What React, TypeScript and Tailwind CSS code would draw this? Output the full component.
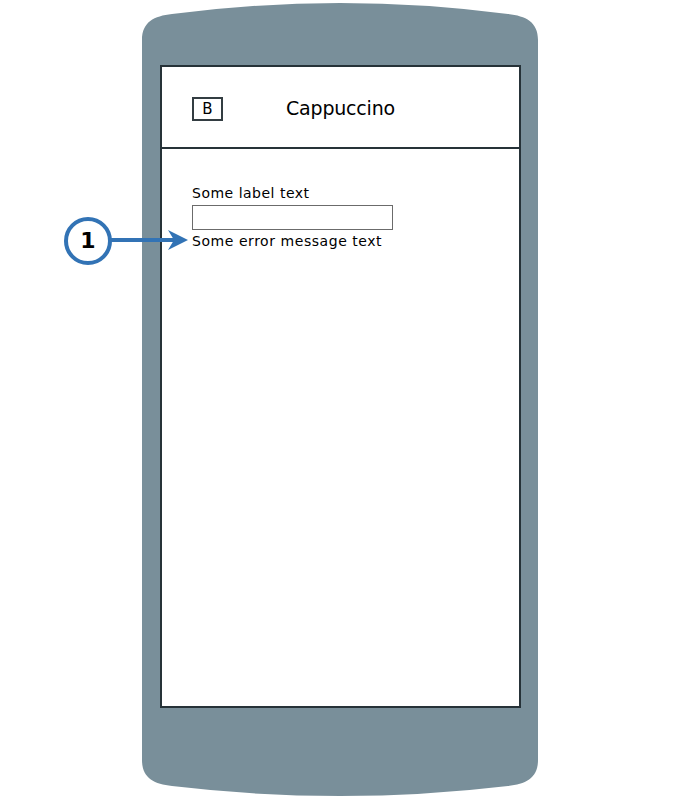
import React from "react";

const FONT = { fontFamily: '"DejaVu Sans", "Liberation Sans", sans-serif' };

export default function App() {
  return (
    <div className="relative w-[680px] h-[800px] bg-white overflow-hidden" style={FONT}>
      <div className="pl-[142px]">
        <div className="relative w-[396px] h-[800px] pt-[65px] pl-[18px]">
          <svg
            className="absolute inset-0"
            width="396"
            height="800"
            viewBox="0 0 396 800"
          >
            <path
              d="M0,40 C0,22 12,16 30,14 Q198,-8 366,14 C384,16 396,22 396,40 L396,760 C396,778 384,784 366,786 Q198,806 30,786 C12,784 0,778 0,760 Z"
              fill="#798f9a"
            />
          </svg>
          <div className="relative w-[361px] h-[643px] bg-white border-2 border-[#263238] flex flex-col">
            <div className="h-[82px] pt-[3px] border-b-2 border-[#263238] grid grid-cols-[1fr_auto_1fr] items-center">
              <div className="pl-[30px]">
                <div className="w-[31px] h-[24px] pt-[2px] border-2 border-[#333d42] flex items-center justify-center text-[15px] text-black leading-none">
                  B
                </div>
              </div>
              <div className="text-[19px] text-black leading-none tracking-[-0.2px]">Cappuccino</div>
              <div />
            </div>
            <div className="pl-[30px] pt-[35px] flex flex-col">
              <div className="text-[14px] leading-[18px] tracking-[0.5px] text-black">Some label text</div>
              <div className="mt-[3px] w-[201px] h-[25px] border border-[#6b6b6b] bg-white" />
              <div className="text-[14px] leading-[18px] tracking-[0.55px] text-black mt-[2px]">Some error message text</div>
            </div>
          </div>
        </div>
      </div>
      <div className="absolute left-[64px] top-[217px] w-[48px] h-[48px] rounded-full border-[4px] border-[#3273b5] bg-white flex items-center justify-center text-[22px] font-semibold text-black leading-none">
        1
      </div>
      <svg className="absolute left-[110px] top-[228px]" width="82" height="24" viewBox="0 0 82 24">
        <line x1="0" y1="12" x2="66" y2="12" stroke="#3273b5" strokeWidth="4" />
        <path d="M58,2 L78,12 L58,22 L64,12 Z" fill="#3273b5" />
      </svg>
    </div>
  );
}
